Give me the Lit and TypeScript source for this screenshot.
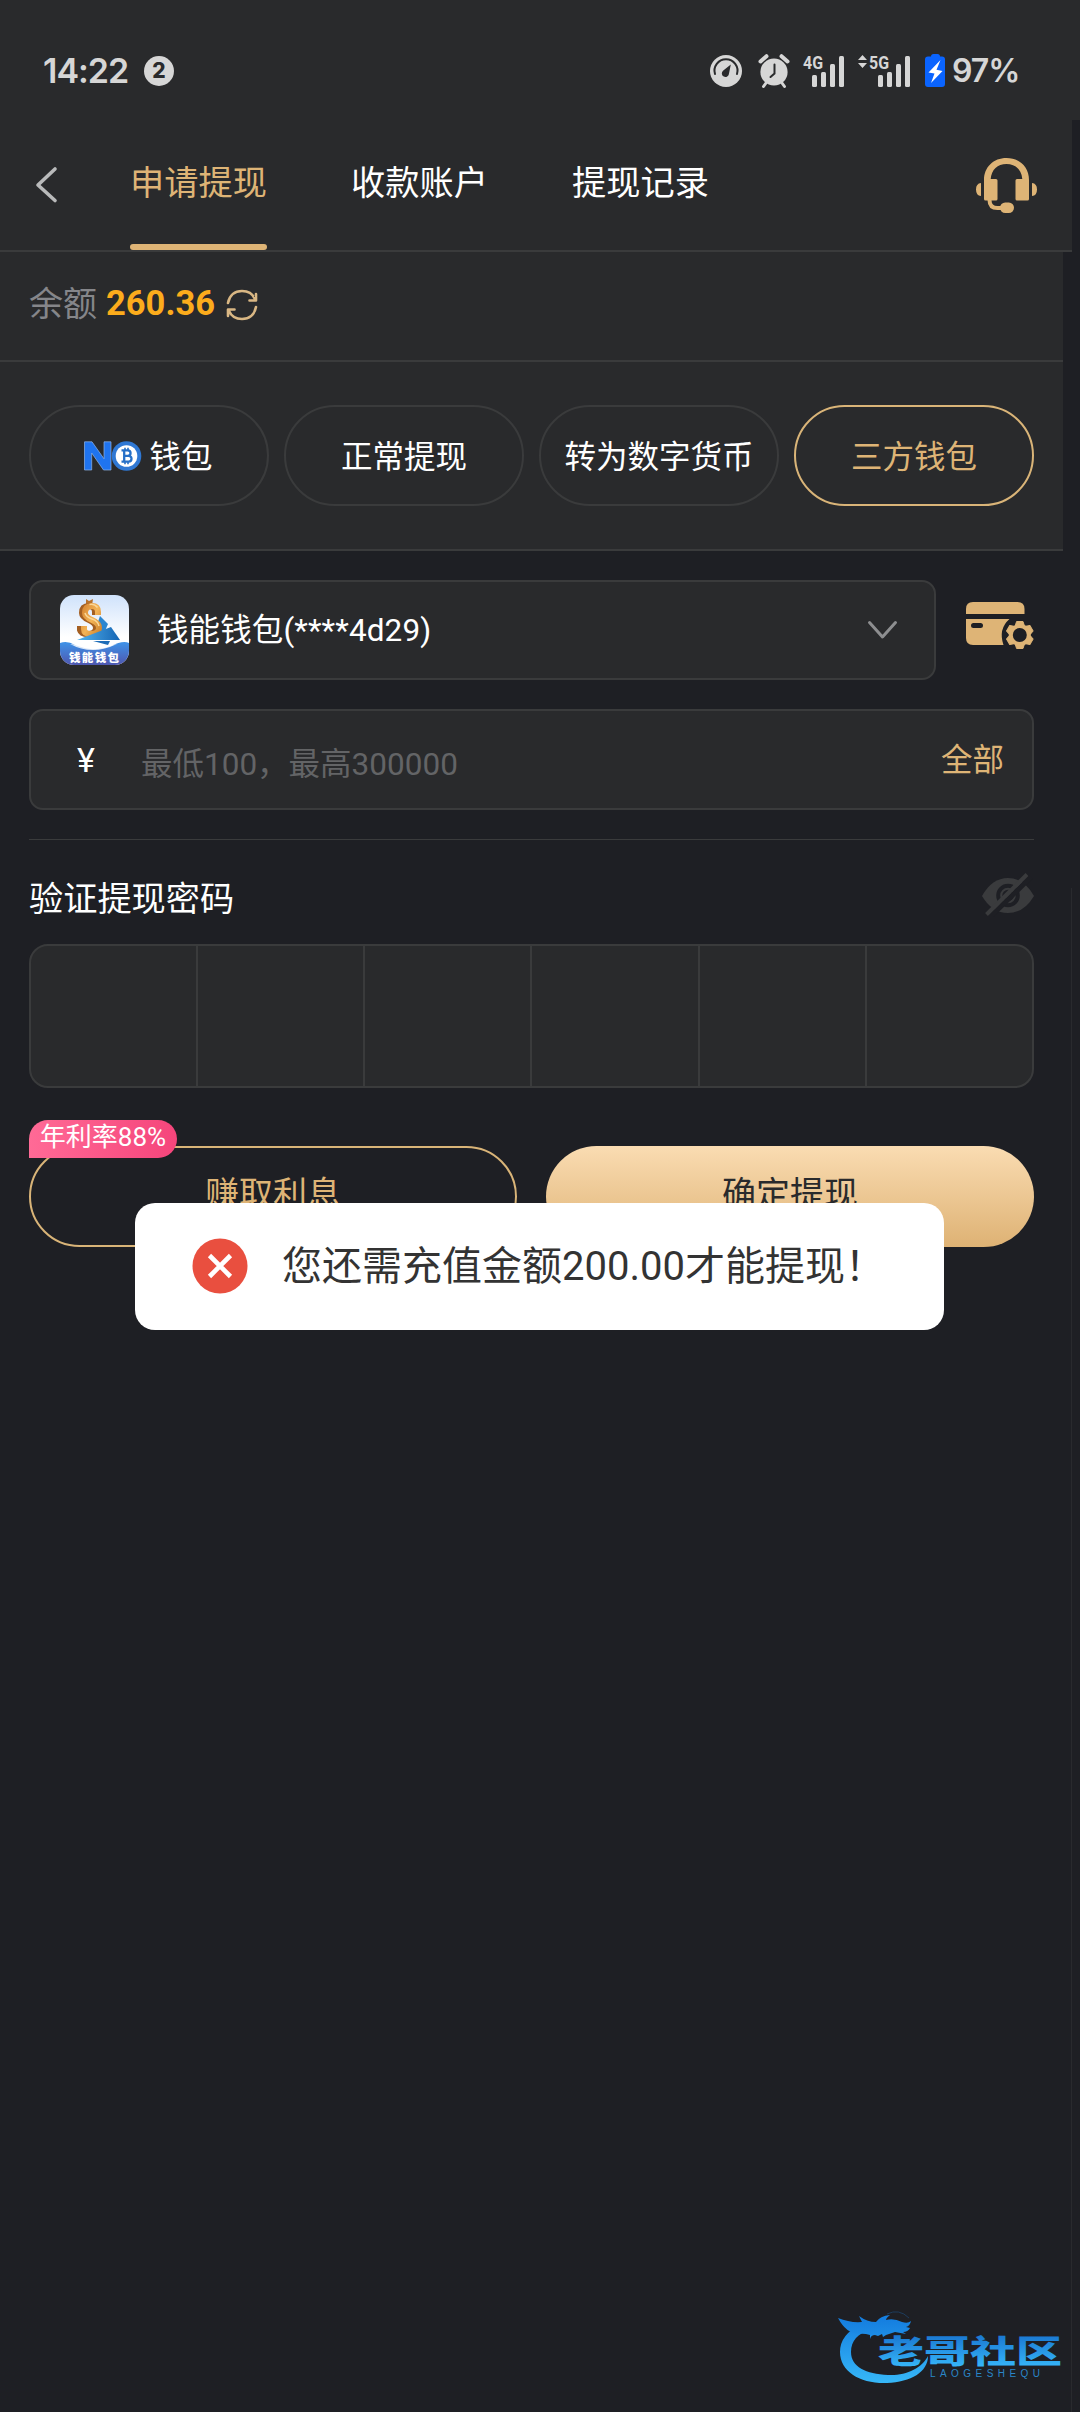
import { LitElement, html, css, svg } from "lit";
import { customElement, state } from "lit/decorators.js";
import { classMap } from "lit/directives/class-map.js";

const noWallet = html`<svg class="no-logo" width="58" height="30" viewBox="0 0 58 30">
  <path d="M.5 29V.8H8l12 17V.8h7V29h-7.500L7.700 12v17z" fill="#1f74f0" stroke="#8fb4e8" stroke-width=".7"/>
  <circle cx="42.500" cy="15" r="14.800" fill="#2f78d4"/>
  <circle cx="42.500" cy="15" r="10.800" fill="#fff"/>
  <g fill="none" stroke="#2670c8" stroke-width="2.300">
    <path d="M37.500 9.300h6.300a2.700 2.700 0 0 1 0 5.500H40m0 0h4.600a2.900 2.900 0 0 1 0 5.800h-7.100M40.200 9.300v11.300"/>
    <path d="M41 6.800v2.500m3-2.500v2.500M41 20.600v2.600m3-2.600v2.600" stroke-width="1.600"/>
  </g>
</svg>`;

const bars = (x: number) => svg`<g fill="#d6d6d6">
  <rect x=${x} y="21" width="5" height="12" rx="1.500"/>
  <rect x=${x + 9} y="18" width="5" height="15" rx="1.500"/>
  <rect x=${x + 18} y="10" width="5" height="23" rx="1.500"/>
  <rect x=${x + 27} y="2" width="5" height="31" rx="1.500"/>
</g>`;

@customElement("app-root")
export class AppRoot extends LitElement {
  @state() private tab = 0;
  @state() private method = 3;

  private tabs = ["申请提现", "收款账户", "提现记录"];
  private methods = ["钱包", "正常提现", "转为数字货币", "三方钱包"];

  static styles = css`
    :host {
      display: block;
      position: relative;
      width: 1080px;
      height: 2412px;
      overflow: hidden;
      background: #1e1f24;
      color: #fff;
      font-family: Roboto, "Noto Sans CJK SC", sans-serif;
      font-size: 31.5px;
    }
    * { box-sizing: border-box; }
    svg { display: block; flex: none; }
    .status {
      display: flex;
      align-items: center;
      height: 120px;
      padding: 22px 62px 0 43px;
      background: #292a2c;
      color: #d6d6d6;
      font-family: Inter, Roboto, sans-serif;
      font-weight: 600;
      font-size: 34px;
    }
    .clock { width: 101px; letter-spacing: -1px; }
    .clock, .percent { line-height: 40px; }
    .count {
      width: 30px; height: 30px; border-radius: 50%;
      background: #d6d6d6; color: #292a2c;
      font-size: 21px; font-weight: 800; line-height: 30px; text-align: center;
    }
    .sys { display: flex; align-items: center; margin-left: auto; }
    .percent { width: 66px; margin-left: 7px; font-size: 32px; letter-spacing: -1px; white-space: nowrap; }
    .header {
      display: flex;
      align-items: stretch;
      width: 1072px;
      height: 132px;
      padding: 0 34px 0 35px;
      background: #292a2c;
      border-bottom: 2px solid #3a3b3c;
    }
    .back, .service { display: flex; align-items: center; }
    .service { padding-top: 2px; }
    .tabs { display: flex; gap: 84px; margin-left: 71px; flex: 1; }
    .tab {
      width: 137px;
      height: 130px;
      font-size: 34.2px;
      line-height: 127px;
      text-align: center;
      white-space: nowrap;
    }
    .tab.on { color: #deb476; }
    .tab.on::after {
      content: ""; display: block; height: 6px; margin-top: -3px; border-radius: 3px; background: #deb476;
    }
    .panel { width: 1063px; background: #292a2c; border-bottom: 2px solid #3a3b3c; }
    .balance {
      display: flex; align-items: center; height: 110px; padding: 0 29px 6px; font-size: 34px;
    }
    .balance .label { margin-top: -3px; color: #85868a; }
    .balance .sum { margin: 0 11px 0 9px; color: #fcac1c; font-weight: 700; font-size: 34.5px; }
    .balance svg { margin-top: 3px; }
    .methods { display: flex; gap: 15px; height: 189px; padding: 43px 29px; }
    .pill {
      display: flex; align-items: center; justify-content: center; gap: 7px;
      width: 240px; height: 101px;
      border: 2px solid #3a3b3c; border-radius: 51px;
      white-space: nowrap;
    }
    .pill:first-child { padding-right: 1px; }
    .pill span { margin-top: -4px; }
    .pill.on { border-color: #d9b478; color: #deb476; }
    .main { display: flex; flex-direction: column; padding: 29px 46px 0 29px; }
    .row { display: flex; gap: 30px; }
    .field {
      display: flex; align-items: center; background: #292a2c;
      border: 2px solid #3a3b3c; border-radius: 14px;
    }
    .select { width: 907px; height: 100px; padding: 0 36px 0 29px; }
    .select .name { flex: 1; margin-left: 28px; padding-bottom: 7px; letter-spacing: 0.1px; }
    .manage { display: flex; align-items: center; padding-bottom: 9px; }
    .amount { height: 101px; margin-top: 29px; padding: 0 28px 0 46px; }
    .amount .yen { width: 64px; font-size: 34px; }
    .amount .hint { flex: 1; color: #636466; padding-top: 2px; }
    .amount .all { color: #deb476; padding-bottom: 6px; }
    .rule { height: 1px; margin-top: 29px; background: #3a3b3c; }
    .verify {
      display: flex; justify-content: space-between; align-items: center;
      height: 104px; padding-top: 10px; font-size: 34.2px;
    }
    .verify svg { margin-top: -5px; }
    .verify span { margin-top: -2px; }
    .pin {
      display: grid; grid-template-columns: 165px repeat(5, 1fr); height: 144px;
      background: #292a2c; border: 2px solid #3a3b3c; border-radius: 19px;
    }
    .cell + .cell { border-left: 2px solid #3a3b3c; }
    .actions { display: flex; gap: 29px; margin-top: 58px; }
    .btn {
      position: relative; width: 488px; height: 101px; border-radius: 51px;
      font-size: 34px; line-height: 93px; text-align: center;
    }
    .earn { border: 2px solid #d9b478; color: #deb476; }
    .submit { background: linear-gradient(#fadcb2, #deb274); color: #292a2c; line-height: 97px; }
    .rate {
      position: absolute; left: -2px; top: -28px; width: 148px; height: 38px;
      border-radius: 20px 20px 20px 0;
      background: linear-gradient(90deg, #ff6a96, #f5457b);
      color: #fff; font-size: 26px; line-height: 35px; white-space: nowrap;
    }
    .toast {
      position: absolute; left: 135px; top: 1203px; width: 809px; height: 127px;
      display: flex; align-items: center; gap: 34px; padding: 0 0 2px 57px;
      border-radius: 20px; background: #fff; color: #333;
      font-size: 40px; white-space: nowrap;
    }
    .toast span { margin-top: -5px; }
    .edge { position: absolute; left: 1071px; top: 888px; width: 1px; height: 1524px; background: #292a2e; }
    .mark { position: absolute; left: 836px; top: 2306px; }
  `;

  private statusBar() {
    return html`<div class="status">
      <span class="clock">14:22</span><span class="count">2</span>
      <div class="sys">
        <svg width="235" height="34" viewBox="0 0 235 34" overflow="visible">
          <circle cx="16" cy="17" r="16" fill="#d6d6d6"/>
          <path d="M5 20a11.500 11.500 0 1 1 22 0" fill="none" stroke="#292a2c" stroke-width="2" stroke-linecap="round"/>
          <path d="M20.800 10.500 19 19.500a3.600 3.600 0 1 1-5.700-3z" fill="#292a2c"/>
          <g transform="translate(48 0)" fill="#d6d6d6">
            <circle cx="16" cy="18" r="13.600"/>
            <path d="M2.500 7.500 8.500 2.200M29.500 7.500 23.500 2.200" stroke="#d6d6d6" stroke-width="4" stroke-linecap="round"/>
            <path d="m8 29-2.500 3.500M24 29l2.500 3.500" stroke="#d6d6d6" stroke-width="3" stroke-linecap="round"/>
            <path d="M16.500 10.500v9l-4 3.500" fill="none" stroke="#292a2c" stroke-width="2" stroke-linecap="round"/>
          </g>
          <text x="93" y="14.500" font-family="Roboto" font-size="17.500" font-weight="700" fill="#d6d6d6" textLength="20" lengthAdjust="spacingAndGlyphs">4G</text>
          ${bars(102)}
          <path d="m152.500 1 4.500 5h-9zM152.500 14l4.500-5h-9z" fill="#d6d6d6"/>
          <text x="159" y="14.500" font-family="Roboto" font-size="17.500" font-weight="700" fill="#d6d6d6" textLength="20" lengthAdjust="spacingAndGlyphs">5G</text>
          ${bars(168)}
          <path d="M221 2.500q0-2.500 2.500-2.500h4q2.500 0 2.500 2.500h2q3 0 3 3V30q0 3-3 3h-14q-3 0-3-3V5.500q0-3 3-3z" fill="#0a64ff"/>
          <path d="m230.500 6-12 12.500 6 1-3.500 9.500L232.500 17l-6-1.200z" fill="#fff"/>
        </svg>
        <span class="percent">97%</span>
      </div>
    </div>`;
  }

  private appIcon() {
    return html`<svg width="69" height="70" viewBox="0 0 69 70">
      <defs>
        <linearGradient id="sky" x1="0" y1="0" x2="0" y2="1"><stop offset="0" stop-color="#cfe2fb"/><stop offset=".6" stop-color="#fff"/></linearGradient>
        <linearGradient id="sea" x1="0" y1="0" x2="0" y2="1"><stop offset="0" stop-color="#3f93e8"/><stop offset="1" stop-color="#4e57b0"/></linearGradient>
        <linearGradient id="gold" x1="0" y1="0" x2="1" y2="1"><stop offset="0" stop-color="#d98a35"/><stop offset=".5" stop-color="#f3b457"/><stop offset="1" stop-color="#d08630"/></linearGradient>
        <linearGradient id="sail" x1="0" y1="0" x2="1" y2="0"><stop offset="0" stop-color="#54b4ee"/><stop offset="1" stop-color="#1565b4"/></linearGradient>
        <clipPath id="tile"><rect width="69" height="70" rx="14"/></clipPath>
      </defs>
      <g clip-path="url(#tile)">
        <rect width="69" height="70" fill="url(#sky)"/>
        <path d="m40 21 8 8-3 7-12 5z" fill="#2b86d0"/>
        <path d="m26 4 3 2 4-2-1 7h-6z" fill="#b8722c"/>
        <g fill="none">
          <path d="M36 20v-3q0-6-6-6-7 0-7 7 0 4 7 7 7 3 7 8 0 6-8 6-7 0-8-4v-4" stroke="#a45f22" stroke-width="6" transform="translate(-1 0)"/>
          <path d="M38 20v-3q0-6-6-6-7 0-7 7 0 4 7 7 7 3 7 8 0 6-8 6-7 0-7-5v-3" stroke="url(#gold)" stroke-width="6"/>
          <path d="M37.500 12.500q-3-4-8-3M25 18q1 4 7 6t7 7" stroke="#fbd796" stroke-width="1.500"/>
        </g>
        <path d="m17 45 34-13 9 13z" fill="url(#sail)"/>
        <path d="m33 46 17 0-2 4z" fill="#1e6db8"/>
        <path d="M0 48q7-3 15 2 20 8 36 1 12-6 18-3v22H0z" fill="url(#sea)"/>
        <path d="M10 49q22 12 47 0-20 4-47 0z" fill="#fff" opacity=".8"/>
        <text x="9" y="67" font-family="Noto Sans CJK SC" font-size="11.500" font-weight="900" fill="#fff" textLength="50">钱能钱包</text>
      </g>
    </svg>`;
  }

  render() {
    return html`
      ${this.statusBar()}
      <div class="header">
        <div class="back"><svg width="24" height="38" viewBox="0 0 24 38"><path d="M20 3 3 19l17 15.500" fill="none" stroke="#b9babb" stroke-width="3.600" stroke-linecap="round" stroke-linejoin="round"/></svg></div>
        <div class="tabs">
          ${this.tabs.map((t, i) => html`<div class=${classMap({ tab: true, on: i === this.tab })} @click=${() => (this.tab = i)}>${t}</div>`)}
        </div>
        <div class="service">
          <svg width="63" height="56" viewBox="0 0 63 56">
            <g fill="#deb476">
              <path d="M9 22C9 9 18.500 0 31.500 0S54 9 54 22v19q0 1.500-1.500 1.500H42q-1.500 0-1.500-1.500V22.500q0-1.500 1.500-1.500h5.300C46.500 11.500 40.500 6 31.500 6S16.500 11.500 15.700 21H21q1.500 0 1.500 1.500V41q0 1.500-1.500 1.500H10.500Q9 42.500 9 41z"/>
              <path d="M6 25v13q-5-.5-5-6.500T6 25zM57 25v13q5-.5 5-6.500T57 25z"/>
              <rect x="25" y="44.500" width="14" height="10.500" rx="5.200"/>
            </g>
            <path d="M14.500 42q0 8 8 8H28" fill="none" stroke="#deb476" stroke-width="4"/>
          </svg>
        </div>
      </div>
      <div class="panel balance">
        <span class="label">余额</span><span class="sum">260.36</span>
        <svg width="32" height="32" viewBox="0 0 32 32" fill="none" stroke="#d9b784" stroke-width="2.600" stroke-linecap="round" stroke-linejoin="round">
          <path d="M2 14C3.500 6 9 2 16 2c6.500 0 11 3.500 13 8M30 5v6.500h-6.500M30 18c-1.500 8-7 12-14 12-6.500 0-11-3.500-13-8M2 27v-6.500h6.500"/>
        </svg>
      </div>
      <div class="panel methods">
        ${this.methods.map((m, i) => html`<div class=${classMap({ pill: true, on: i === this.method })} @click=${() => (this.method = i)}>
          ${i === 0 ? noWallet : ""}<span>${m}</span>
        </div>`)}
      </div>
      <div class="main">
        <div class="row">
          <div class="field select">
            ${this.appIcon()}
            <span class="name">钱能钱包(****4d29)</span>
            <svg width="31" height="20" viewBox="0 0 31 20"><path d="m2.500 2.500 13 14.500 13-14.500" fill="none" stroke="#8d8e90" stroke-width="3" stroke-linecap="round" stroke-linejoin="round"/></svg>
          </div>
          <div class="manage">
            <svg width="68" height="48" viewBox="0 0 68 48">
              <g fill="#deb476">
                <path d="M0 12V7q0-7 7-7h44.500q7 0 7 7v5z"/>
                <path fill-rule="evenodd" d="M0 17h43.500Q32 27 37.500 43H7q-7 0-7-7zM7.500 21a2.500 2.500 0 0 0 0 5h7a2.500 2.500 0 0 0 0-5z"/>
              </g>
              <g transform="translate(53.800 33)">
                <circle r="9" fill="none" stroke="#deb476" stroke-width="4"/>
                ${[0, 60, 120, 180, 240, 300].map((a) => svg`<path d="M-4.500-9.500-3.200-13.500h6.400L4.500-9.500z" fill="#deb476" stroke="#deb476" stroke-linejoin="round" transform="rotate(${a})"/>`)}
              </g>
            </svg>
          </div>
        </div>
        <div class="field amount">
          <span class="yen">¥</span><span class="hint">最低100，最高300000</span><span class="all">全部</span>
        </div>
        <div class="rule"></div>
        <div class="verify">
          <span>验证提现密码</span>
          <svg width="52" height="44" viewBox="0 0 52 44">
            <path d="M0 23Q10 5 26 5t26 18Q42 40 26 40T0 23z" fill="#3a3b3d"/>
            <circle cx="26" cy="22.500" r="9.800" fill="none" stroke="#1e1f24" stroke-width="4"/>
            <circle cx="26" cy="22.500" r="4.500" fill="none" stroke="#1e1f24" stroke-width="2.500"/>
            <path d="M8 44 49 4" stroke="#1e1f24" stroke-width="5"/>
            <path d="M4.500 41.500 45 1.500" stroke="#3a3b3d" stroke-width="4"/>
          </svg>
        </div>
        <div class="pin">${[0, 1, 2, 3, 4, 5].map(() => html`<div class="cell"></div>`)}</div>
        <div class="actions">
          <div class="btn earn">赚取利息<span class="rate">年利率88%</span></div>
          <div class="btn submit">确定提现</div>
        </div>
      </div>
      <div class="edge"></div>
      <div class="toast">
        <svg width="56" height="56" viewBox="0 0 56 56"><circle cx="28" cy="28" r="27.500" fill="#e94f3f"/><path d="m17.500 17.500 21 21M38.500 17.500l-21 21" stroke="#fff" stroke-width="4.600"/></svg>
        <span>您还需充值金额200.00才能提现！</span>
      </div>
      <svg class="mark" width="228" height="82" viewBox="0 0 228 82">
        <defs><linearGradient id="wm" gradientUnits="userSpaceOnUse" x1="0" y1="12" x2="0" y2="78"><stop offset="0" stop-color="#157fe0"/><stop offset="1" stop-color="#37b8f8"/></linearGradient>
        <linearGradient id="wt" gradientUnits="userSpaceOnUse" x1="0" y1="30" x2="0" y2="60"><stop offset="0" stop-color="#1b79d2"/><stop offset="1" stop-color="#35b4f8"/></linearGradient></defs>
        <path fill="url(#wm)" d="M26 18Q4 28 4 46C4 66 25 78 51 77 75 76 92 66 92 50 86 62 70 70 52 69 30 68 15 61 15 46 15 35 22 27 34 24l4-3z"/>
        <path fill="url(#wm)" transform="translate(2 2)" d="M0 10q12 5 24 4l-3-6q8 6 17 6 4-6 14-7-4 3-4 5 8-2 16 2 6 2 9-1-1 5-5 6l4 1q-2 4-7 4l3 2-11-2-9 3-3 2-1-3-4 2-3-1q-4 0-5 4v-4q-6-2-12-1-12-1-20-16z"/>
        <path d="M51 8q12-6 22 4" fill="none" stroke="#1d3c5c" stroke-width="1"/>
        <text x="42" y="57" font-family="Noto Sans CJK SC" font-size="32" font-weight="900" fill="url(#wt)" textLength="184" lengthAdjust="spacingAndGlyphs">老哥社区</text>
        <text x="94" y="71" font-family="Liberation Sans" font-size="10" fill="#2a86c8" textLength="110">LAOGESHEQU</text>
      </svg>
    `;
  }
}
